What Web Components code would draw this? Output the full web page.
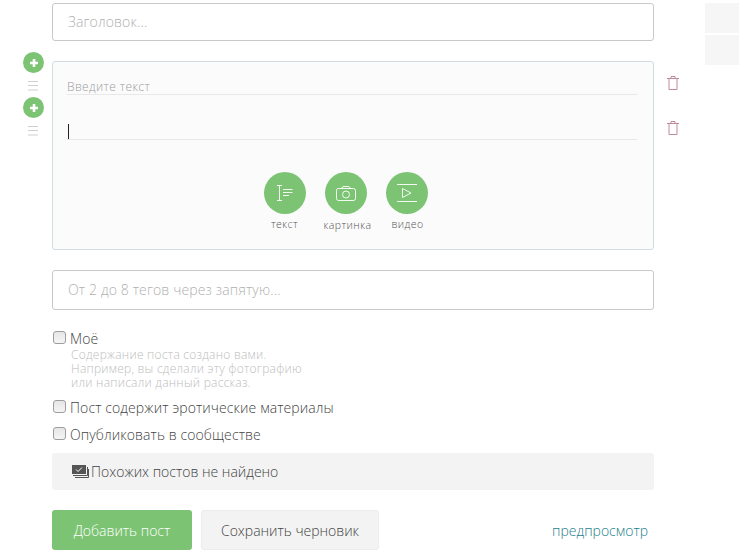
<!DOCTYPE html>
<html lang="ru">
<head>
<meta charset="utf-8">
<title>Новый пост</title>
<style>
  html, body { margin: 0; padding: 0; background: #fff; overflow: hidden; }
  body { font-family: "Open Sans", "Liberation Sans", sans-serif; font-weight: 300; color: #444; }
</style>
</head>
<body>
<post-form></post-form>

<script>
class TextField extends HTMLElement {
  constructor() {
    super();
    this.attachShadow({ mode: 'open' });
  }

  connectedCallback() {
    this.shadowRoot.innerHTML = `
      <style>
        :host { display: block; height: ${this.getAttribute('height') || 38}px; box-sizing: border-box;
          border: 1px solid #c9c9c9; border-radius: 3px; background: #fff; }
        div { height: 100%; display: flex; align-items: center; padding: 0 0 2px 15px; box-sizing: border-box;
          font-size: 14px; color: #b0b0b0; letter-spacing: .14px; }
      </style>
      <div>${this.getAttribute('placeholder')}</div>
    `;
  }
}

class RoundAction extends HTMLElement {
  constructor() {
    super();
    this.attachShadow({ mode: 'open' });
  }

  connectedCallback() {
    this.shadowRoot.innerHTML = `
      <style>
        :host { display: flex; flex-direction: column; align-items: center; width: 42px; }
        .circle { width: 42px; height: 42px; border-radius: 50%; background: #7cc474;
          display: flex; align-items: center; justify-content: center; }
        span { margin-top: 3px; font-size: 10.5px; line-height: 14px; color: #555; font-weight: 300;
          white-space: nowrap; letter-spacing: .45px; }
        :host([label="картинка"]) span { margin: 4px 0 0 4px; }
        :host([label="видео"]) span { margin-left: 2px; }
        svg { display: block; }
      </style>
      <div class="circle"><slot></slot></div>
      <span>${this.getAttribute('label')}</span>
    `;
  }
}

class CheckRow extends HTMLElement {
  constructor() {
    super();
    this.attachShadow({ mode: 'open' });
  }

  connectedCallback() {
    this.shadowRoot.innerHTML = `
      <style>
        :host { display: grid; grid-template-columns: 18px 1fr; font-size: 14px; line-height: 19px; color: #444;
          letter-spacing: .1px; }
        i { display: block; width: 11px; height: 11px; margin: 2px 0 0 1px; border: 1px solid #9d9d9d;
          border-radius: 3px; background: linear-gradient(#e6e6e6, #f5f5f5); }
        .help { grid-column: 2; padding-left: 1px; font-size: 12px; line-height: 14px; color: #bdbdbd;
          letter-spacing: .25px; }
      </style>
      <i></i>
      <span>${this.getAttribute('label')}</span>
      <div class="help"><slot></slot></div>
    `;
  }
}

class BlockHandles extends HTMLElement {
  constructor() {
    super();
    this.attachShadow({ mode: 'open' });
  }

  connectedCallback() {
    const bars = `<svg width="10" height="10" viewBox="0 0 10 10" fill="none" stroke="#cfcfcf">
      <path d="M0 .5h10M0 4.5h10M0 9h10"/></svg>`;
    const plus = `<b><svg width="8" height="8" viewBox="0 0 8 8" fill="#fff">
      <path d="M2.7 0h2.6v2.7H8v2.6H5.3V8H2.7V5.3H0V2.7h2.7z"/></svg></b>`;
    this.shadowRoot.innerHTML = `
      <style>
        :host { display: flex; flex-direction: column; align-items: center; width: 21px; margin-left: 23px; }
        b { display: flex; width: 21px; height: 21px; border-radius: 50%; background: #7cc474;
          align-items: center; justify-content: center; }
        svg { display: block; }
        svg[width="10"] { margin: 8px 1px 6px 0; }
      </style>
      ${plus}${bars}${plus}${bars}
    `;
  }
}

class BlockEditor extends HTMLElement {
  constructor() {
    super();
    this.attachShadow({ mode: 'open' });
  }

  connectedCallback() {
    this.shadowRoot.innerHTML = `
      <style>
        :host { display: block; box-sizing: border-box; height: 189px; padding: 0 16px 0 14px;
          border: 1px solid #d3dbe3; border-radius: 3px; background: #fbfbfb; }
        .line { border-bottom: 1px solid #e8e8e8; }
        .first { height: 32px; font-size: 12px; line-height: 15px; color: #9c9c9c;
          display: flex; align-items: flex-end; letter-spacing: .38px; }
        .second { height: 44px; display: flex; align-items: flex-end; }
        .cursor { width: 1px; height: 15px; margin-left: 1px; background: #222; }
        .actions { display: flex; justify-content: center; gap: 19px; margin-top: 32px; padding-right: 13px; }
      </style>
      <div class="line first"><span>Введите текст</span></div>
      <div class="line second"><div class="cursor"></div></div>
      <div class="actions"><slot></slot></div>
    `;
  }
}

class PostForm extends HTMLElement {
  constructor() {
    super();
    this.attachShadow({ mode: 'open' });
  }

  connectedCallback() {
    const trash = `<svg width="12" height="14" viewBox="0 0 12 14" fill="none" stroke="#c08a9c">
      <path d="M0 2.5h12M4 2.5v-2h4v2M2 2.5v11h8v-11"/></svg>`;
    this.shadowRoot.innerHTML = `
      <style>
        :host { display: flex; width: 739px; height: 553px; overflow: hidden; box-sizing: border-box; padding-top: 3px; }
        svg { display: block; }
        .main { width: 654px; flex: none; }
        .pad { margin-left: 52px; }
        .editor-row { display: grid; grid-template-columns: 52px 602px; margin-top: 20px; }
        block-handles { margin-top: -9px; height: 90px; }
        .checks { margin-top: 19px; }
        .check-2 { margin-top: 8px; }
        .check-3 { margin-top: 8px; }
        .similar { display: flex; align-items: center; height: 37px; margin-top: 9px; padding-left: 20px;
          background: #f3f3f3; border-radius: 3px; font-size: 14px; color: #444; }
        .similar svg { margin-right: 2px; }
        .buttons { display: flex; align-items: center; margin-top: 20px; }
        .btn { display: flex; align-items: center; justify-content: center; height: 40px; box-sizing: border-box;
          border-radius: 3px; font-size: 14px; }
        .add { width: 140px; background: #7cc474; color: #fff; }
        .draft { width: 178px; margin-left: 9px; background: #f3f3f3; border: 1px solid #ececec; color: #444; }
        .preview { margin-left: auto; margin-right: 6px; font-size: 14px; color: #1d7f8c; font-weight: 300; }
        .trash { display: flex; flex-direction: column; gap: 31px; margin: 73px 0 0 13px; flex: none; }
        .side { display: flex; flex-direction: column; gap: 2px; width: 34px; margin-left: 26px; flex: none; }
        .side div { height: 30px; background: #f6f6f6; }
      </style>
      <div class="main">
        <text-field class="pad" placeholder="Заголовок..."></text-field>
        <div class="editor-row">
          <block-handles></block-handles>
          <block-editor>
            <round-action label="текст">
              <svg width="16" height="16" viewBox="0 0 16 16" fill="none" stroke="#fff" stroke-opacity=".9">
                <path d="M0 .5h5M2.5.5v15M0 15.5h5M6 4.5h9.5M6 7.5h9.5M6 10.5h6"/>
              </svg>
            </round-action>
            <round-action label="картинка">
              <svg width="20" height="15" viewBox="0 0 20 15" fill="none" stroke="#fff" stroke-opacity=".9">
                <rect x=".5" y="2.5" width="19" height="12" rx="2"/>
                <path d="M5.5 2.5l1.5-2h6l1.5 2"/>
                <circle cx="10" cy="8.5" r="3.5"/>
              </svg>
            </round-action>
            <round-action label="видео">
              <svg width="20" height="18" viewBox="0 0 20 18" fill="none" stroke="#fff" stroke-opacity=".9">
                <path d="M0 .5h20M0 17.5h20M5.5 4.5v9l8.5-4.5z"/>
              </svg>
            </round-action>
          </block-editor>
        </div>
        <text-field class="pad" style="margin-top:20px" height="40" placeholder="От 2 до 8 тегов через запятую..."></text-field>
        <div class="pad checks">
          <check-row class="check-1" label="Моё">Содержание поста создано вами.<br>Например, вы сделали эту фотографию<br>или написали данный рассказ.</check-row>
          <check-row class="check-2" label="Пост содержит эротические материалы"></check-row>
          <check-row class="check-3" label="Опубликовать в сообществе"></check-row>
        </div>
        <div class="pad similar">
          <svg width="17" height="14" viewBox="0 0 17 14" fill="none">
            <rect x="0" y="0" width="14" height="9" fill="#555"/>
            <path d="M4 4.5l2 2 4-4" stroke="#fff"/>
            <path d="M1 10.5h14.5V2M3 12.5h13.5V4" stroke="#555"/>
          </svg>
          Похожих постов не найдено
        </div>
        <div class="pad buttons">
          <div class="btn add">Добавить пост</div>
          <div class="btn draft">Сохранить черновик</div>
          <div class="preview">предпросмотр</div>
        </div>
      </div>
      <div class="trash">${trash}${trash}</div>
      <div class="side"><div></div><div></div></div>
    `;
  }
}

customElements.define('text-field', TextField);
customElements.define('round-action', RoundAction);
customElements.define('check-row', CheckRow);
customElements.define('block-handles', BlockHandles);
customElements.define('block-editor', BlockEditor);
customElements.define('post-form', PostForm);
</script>
</body>
</html>
